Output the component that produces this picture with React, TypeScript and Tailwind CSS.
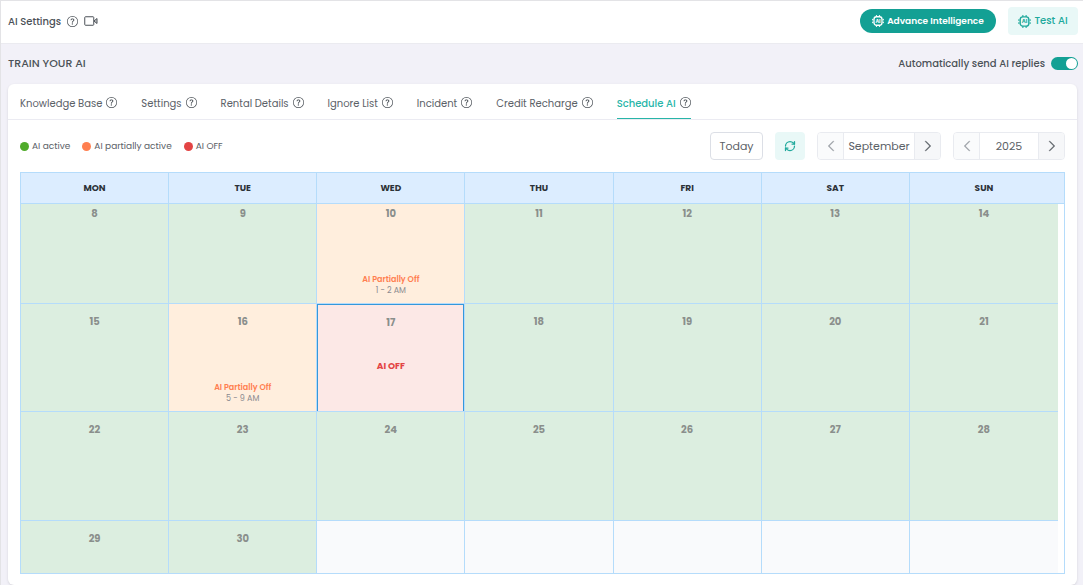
import React, { useState } from 'react';
import { BsQuestionCircle, BsChevronLeft, BsChevronRight } from 'react-icons/bs';
import { RefreshCw } from 'lucide-react';

type DayStatus = 'active' | 'partial' | 'off' | 'empty';

interface Day {
  date: number | null;
  status: DayStatus;
  hours?: string;
}

const TABS = [
  'Knowledge Base',
  'Settings',
  'Rental Details',
  'Ignore List',
  'Incident',
  'Credit Recharge',
  'Schedule AI',
];

const WEEKDAYS = ['MON', 'TUE', 'WED', 'THU', 'FRI', 'SAT', 'SUN'];

const LEGEND = [
  { label: 'AI active', color: 'bg-[#50ab2b]' },
  { label: 'AI partially active', color: 'bg-[#ff7f50]' },
  { label: 'AI OFF', color: 'bg-[#e34444]' },
];

const SPECIAL_DAYS: Record<number, { status: DayStatus; hours?: string }> = {
  10: { status: 'partial', hours: '1 - 2 AM' },
  16: { status: 'partial', hours: '5 - 9 AM' },
  17: { status: 'off' },
};

const TODAY = 17;
const LAST_DAY = 30;

const makeWeek = (start: number): Day[] =>
  WEEKDAYS.map((_, i) => {
    const date = start + i;
    if (date > LAST_DAY) return { date: null, status: 'empty' };
    return { date, ...(SPECIAL_DAYS[date] ?? { status: 'active' }) };
  });

const WEEKS = [
  { days: makeWeek(8), height: 'h-[100px]', pad: 'pt-0' },
  { days: makeWeek(15), height: 'h-[108px]', pad: 'pt-2' },
  { days: makeWeek(22), height: 'h-[109px]', pad: 'pt-2' },
  { days: makeWeek(29), height: 'h-[53px]', pad: 'pt-2' },
];

const STATUS_BG: Record<DayStatus, string> = {
  active: 'bg-[#dceee0]',
  partial: 'bg-[#ffeedd]',
  off: 'bg-[#fce8e6]',
  empty: 'bg-[#f9fafc]',
};

const ChipIcon: React.FC<{ className: string }> = ({ className }) => (
  <svg viewBox="0 0 24 24" className={`shrink-0 ${className}`} fill="none" stroke="currentColor" strokeWidth="2.6" strokeLinecap="round" aria-hidden="true">
    <rect x="4" y="3.5" width="16" height="17" rx="5" />
    <path d="M9 1.5v1M15 1.5v1M9 21.5v1M15 21.5v1M1.5 9v.5M1.5 14.5v.5M22.5 9v.5M22.5 14.5v.5" />
    <text x="12" y="15.5" fontSize="10" fontWeight="700" textAnchor="middle" fill="currentColor" stroke="none">AI</text>
  </svg>
);

const CameraIcon: React.FC = () => (
  <svg viewBox="0 0 28 20" className="h-[10px] w-[14px]" fill="none" stroke="currentColor" strokeWidth="2" strokeLinejoin="round" aria-hidden="true">
    <rect x="1.5" y="1.5" width="18" height="17" rx="1.5" />
    <path d="M20 10l6-5v10z" fill="currentColor" fillOpacity="0.3" />
  </svg>
);

const DayCell: React.FC<{ day: Day; height: string; pad: string; last: boolean }> = ({ day, height, pad, last }) => {
  const isToday = day.date === TODAY;
  return (
    <td className={`border-b border-[#b5dcfb] p-0 align-top ${height} ${last ? '' : 'border-r'} ${STATUS_BG[day.status]}`}>
      <div className={`flex h-full flex-col items-center ${pad} ${isToday ? 'border border-b-0 border-[#3598db]' : ''}`}>
        {day.date && <span className="text-[10px] leading-5 font-bold text-[#8a8f8c]">{day.date}</span>}
        {day.status === 'partial' && (
          <div className="mt-auto pb-[7px] text-center text-[8px] leading-[11px]">
            <p className="font-semibold text-[#ff7f50]">AI Partially Off</p>
            <p className="text-[#8b8b90]">{day.hours}</p>
          </div>
        )}
        {day.status === 'off' && <p className="mt-[25px] text-[9px] leading-4 font-bold text-[#e34444]">AI OFF</p>}
      </div>
    </td>
  );
};

const Stepper: React.FC<{ label: string; value: string; width: string }> = ({ label, value, width }) => (
  <div className="flex h-7 overflow-hidden rounded border border-[#e9ebf0] text-[#5b6167]" role="group" aria-label={label}>
    <button className="flex w-[26px] items-center justify-center border-r border-[#e9ebf0] bg-[#fafbfc] text-[#9b9fa5]" aria-label={`Previous ${label}`}>
      <BsChevronLeft className="size-3" strokeWidth="0.8" />
    </button>
    <span className={`flex items-center justify-center text-[11px] ${width}`}>{value}</span>
    <button className="flex w-[26px] items-center justify-center border-l border-[#e9ebf0] bg-[#f6f7f9]" aria-label={`Next ${label}`}>
      <BsChevronRight className="size-3" strokeWidth="0.8" />
    </button>
  </div>
);

const App: React.FC = () => {
  const [activeTab, setActiveTab] = useState('Schedule AI');
  const [autoSend, setAutoSend] = useState(true);

  return (
    <div className="min-h-screen border-t border-l border-[#e3e3e6] bg-[#f2f1f8] font-['Poppins','Inter',sans-serif] text-[#4b5157]">
      {/* Header */}
      <header className="flex h-[43px] items-center justify-between border-b border-[#ebebf0] bg-white pr-[5px] pb-[2px] pl-[7px]">
        <div className="flex items-center gap-[6px]">
          <h1 className="text-[10px] font-medium">AI Settings</h1>
          <BsQuestionCircle className="size-[11px]" />
          <CameraIcon />
        </div>
        <div className="flex items-center gap-3">
          <button className="flex h-6 w-[136px] items-center justify-center gap-[3px] rounded-full bg-[#13a094] text-[9px] leading-4 font-semibold text-white">
            <ChipIcon className="size-3" />
            Advance Intelligence
          </button>
          <button className="flex h-7 w-[70px] items-center justify-center gap-[3px] rounded bg-[#e9f8f7] text-[10px] leading-4 font-medium text-[#20a99c]">
            <ChipIcon className="size-[13px]" />
            Test AI
          </button>
        </div>
      </header>

      <div className="flex h-10 items-center justify-between pr-[5px] pb-[2px] pl-[7px]">
        <h2 className="text-[11px] font-medium">TRAIN YOUR AI</h2>
        <label className="flex items-center gap-[6px] text-[10px] font-medium">
          Automatically send AI replies
          <input
            type="checkbox"
            role="switch"
            checked={autoSend}
            onChange={(e) => setAutoSend(e.target.checked)}
            className="flex h-[13px] w-[27px] cursor-pointer appearance-none items-center rounded-full bg-gray-300 px-[1px] before:size-[11px] before:rounded-full before:bg-white checked:justify-end checked:bg-[#13a094]"
          />
        </label>
      </div>

      {/* Schedule card */}
      <main className="mr-[6px] ml-[7px] rounded-md bg-white shadow-sm">
        <nav className="flex h-9 gap-6 border-b border-[#ebebf2] px-3" role="tablist">
          {TABS.map((tab) => (
            <button
              key={tab}
              role="tab"
              aria-selected={tab === activeTab}
              onClick={() => setActiveTab(tab)}
              className={`flex items-center gap-1 border-b pt-1 text-[10px] whitespace-nowrap ${
                tab === activeTab ? 'border-[#28b5a8] font-medium text-[#28b5a8]' : 'border-transparent text-[#5b6167]'
              }`}
            >
              {tab}
              <BsQuestionCircle className="mb-[2px] size-[11px] text-[#4b5157]" />
            </button>
          ))}
        </nav>

        <div className="flex items-center justify-between px-3 pt-3">
          <ul className="flex gap-3 text-[9px] leading-4 text-[#5b6167]">
            {LEGEND.map((item) => (
              <li key={item.label} className="flex items-center gap-[3px]">
                <span className={`size-[9px] rounded-full ${item.color}`} />
                {item.label}
              </li>
            ))}
          </ul>
          <div className="flex gap-3">
            <button className="h-7 w-[53px] rounded border border-[#dcdfe6] text-[11px] text-[#5b6167]">Today</button>
            <button className="flex h-7 w-[30px] items-center justify-center rounded bg-[#e9f8f7] text-[#20a99c]" aria-label="Refresh">
              <RefreshCw className="size-3" strokeWidth={2.5} />
            </button>
            <Stepper label="month" value="September" width="w-[70px]" />
            <Stepper label="year" value="2025" width="w-[58px]" />
          </div>
        </div>

        <div className="px-3 pt-3 pb-[11px]">
          <table className="w-full table-fixed border-separate border-spacing-0 border border-b-0 border-[#b5dcfb]">
            <thead>
              <tr className="h-[31px] bg-[#dcedff]">
                {WEEKDAYS.map((name, i) => (
                  <th
                    key={name}
                    scope="col"
                    className={`border-b border-[#b5dcfb] p-0 pt-[2px] text-[9px] font-bold text-[#2c3238] ${
                      i < WEEKDAYS.length - 1 ? 'border-r' : ''
                    }`}
                  >
                    {name}
                  </th>
                ))}
                <td className="w-[6px] border-b border-[#b5dcfb] p-0" />
              </tr>
            </thead>
            <tbody>
              {WEEKS.map(({ days, height, pad }, row) => (
                <tr key={row}>
                  {days.map((day, i) => (
                    <DayCell key={i} day={day} height={height} pad={pad} last={i === days.length - 1} />
                  ))}
                  {/* scrollbar gutter */}
                  <td className={`p-0 ${row === WEEKS.length - 1 ? 'border-b border-[#b5dcfb]' : ''}`} />
                </tr>
              ))}
            </tbody>
          </table>
        </div>
      </main>
    </div>
  );
};

export default App;
